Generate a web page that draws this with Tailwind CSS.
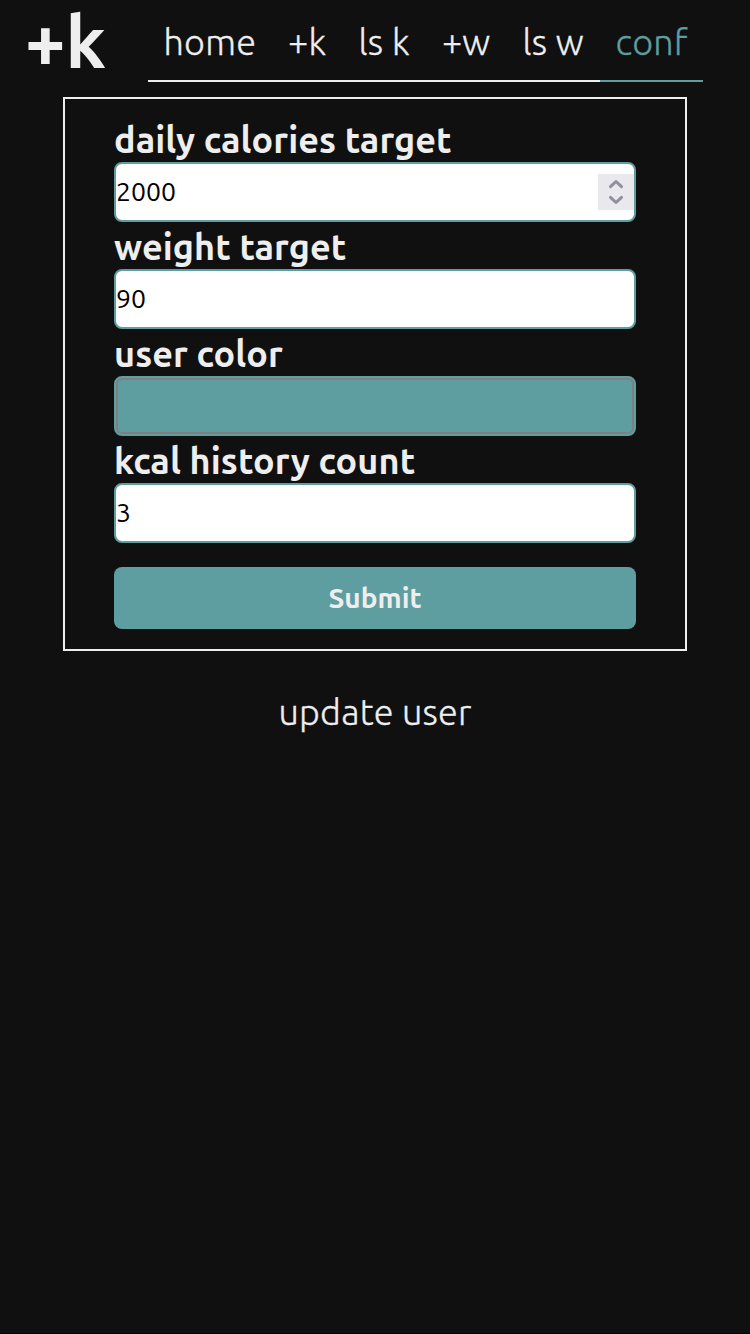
<!DOCTYPE html>
<html lang="en">
<head>
<meta charset="utf-8">
<title>+k conf</title>
<script src="https://cdn.jsdelivr.net/npm/@tailwindcss/browser@4"></script>
</head>
<body class="bg-[#101010] text-[#eeeeee] font-['Ubuntu','Noto_Sans',sans-serif]">
<div class="h-[1334px] overflow-hidden border-b border-[#0b0008]">
  <header class="flex h-[97px] pl-[25px]">
    <a class="w-[123px] h-[82px] text-[72px] leading-[84px] font-bold whitespace-nowrap">+k</a>
    <nav class="flex h-[82px] text-[36px] leading-[84px] font-light whitespace-nowrap [-webkit-text-stroke:0.3px]">
      <a class="w-[124px] pl-[15.5px] tracking-[0.2px] border-b-2 border-[#eeeeee]">home</a>
      <a class="w-[71px] pl-4 tracking-[0.3px] border-b-2 border-[#eeeeee]">+k</a>
      <a class="w-[84px] pl-[15.5px] tracking-[0.3px] border-b-2 border-[#eeeeee]">ls k</a>
      <a class="w-[80px] pl-[15px] border-b-2 border-[#eeeeee]">+w</a>
      <a class="w-[93px] pl-[15.5px] tracking-[0.2px] border-b-2 border-[#eeeeee]">ls w</a>
      <a class="w-[103px] pl-[15.5px] tracking-[0.2px] border-b-2 border-[#5f9ea0] text-[#5f9ea0]">conf</a>
    </nav>
  </header>
  <form class="mx-[63px] h-[554px] border-2 border-[#eeeeee] px-[49px] pt-[18px] text-[36px] leading-[45px] font-semibold whitespace-nowrap">
    <div class="h-[107px]">
      <div class="h-[45px]"><span class="tracking-[0.08px]">daily calories target</span></div>
      <div class="flex items-center justify-between h-[60px] rounded-lg border-2 border-[#5f9ea0] bg-white text-black text-[26.6px] font-normal">
        <span class="pb-[2px]">2000</span>
        <span class="w-9 h-9 bg-[#e9e9ed]">
          <svg class="block" width="36" height="36" fill="none" stroke="#8f8f9d" stroke-width="3" stroke-linecap="round" stroke-linejoin="round"><path d="M12.5 12.7l5.5-5.2 5.5 5.2M12.5 23.3l5.5 5.2 5.5-5.2"/></svg>
        </span>
      </div>
    </div>
    <div class="h-[107px]">
      <div class="h-[45px]"><span class="tracking-[0.08px]">weight target</span></div>
      <div class="flex items-center h-[60px] rounded-lg border-2 border-[#5f9ea0] bg-white text-black text-[26.6px] font-normal"><span class="pb-[2px]">90</span></div>
    </div>
    <div class="h-[107px]">
      <div class="h-[45px]"><span class="tracking-[0.08px]">user color</span></div>
      <div class="h-[60px] rounded-lg border-2 border-[#5f9ea0] bg-[#5f9ea0]"><div class="h-full rounded-md border-2 border-[#808080]"></div></div>
    </div>
    <div class="h-[107px]">
      <div class="h-[45px]"><span class="tracking-[0.1px]">kcal history count</span></div>
      <div class="flex items-center h-[60px] rounded-lg border-2 border-[#5f9ea0] bg-white text-black text-[26.6px] font-normal"><span class="pb-[2px]">3</span></div>
    </div>
    <button type="button" class="block mt-[22px] w-full h-[62px] rounded-lg bg-[#5f9ea0] text-[28px] leading-[62px] text-center"><span>Submit</span></button>
  </form>
  <p class="mt-[39px] text-center text-[36px] leading-[44px] font-light [-webkit-text-stroke:0.3px]"><span class="tracking-[0.2px]">update user</span></p>
</div>
</body>
</html>
